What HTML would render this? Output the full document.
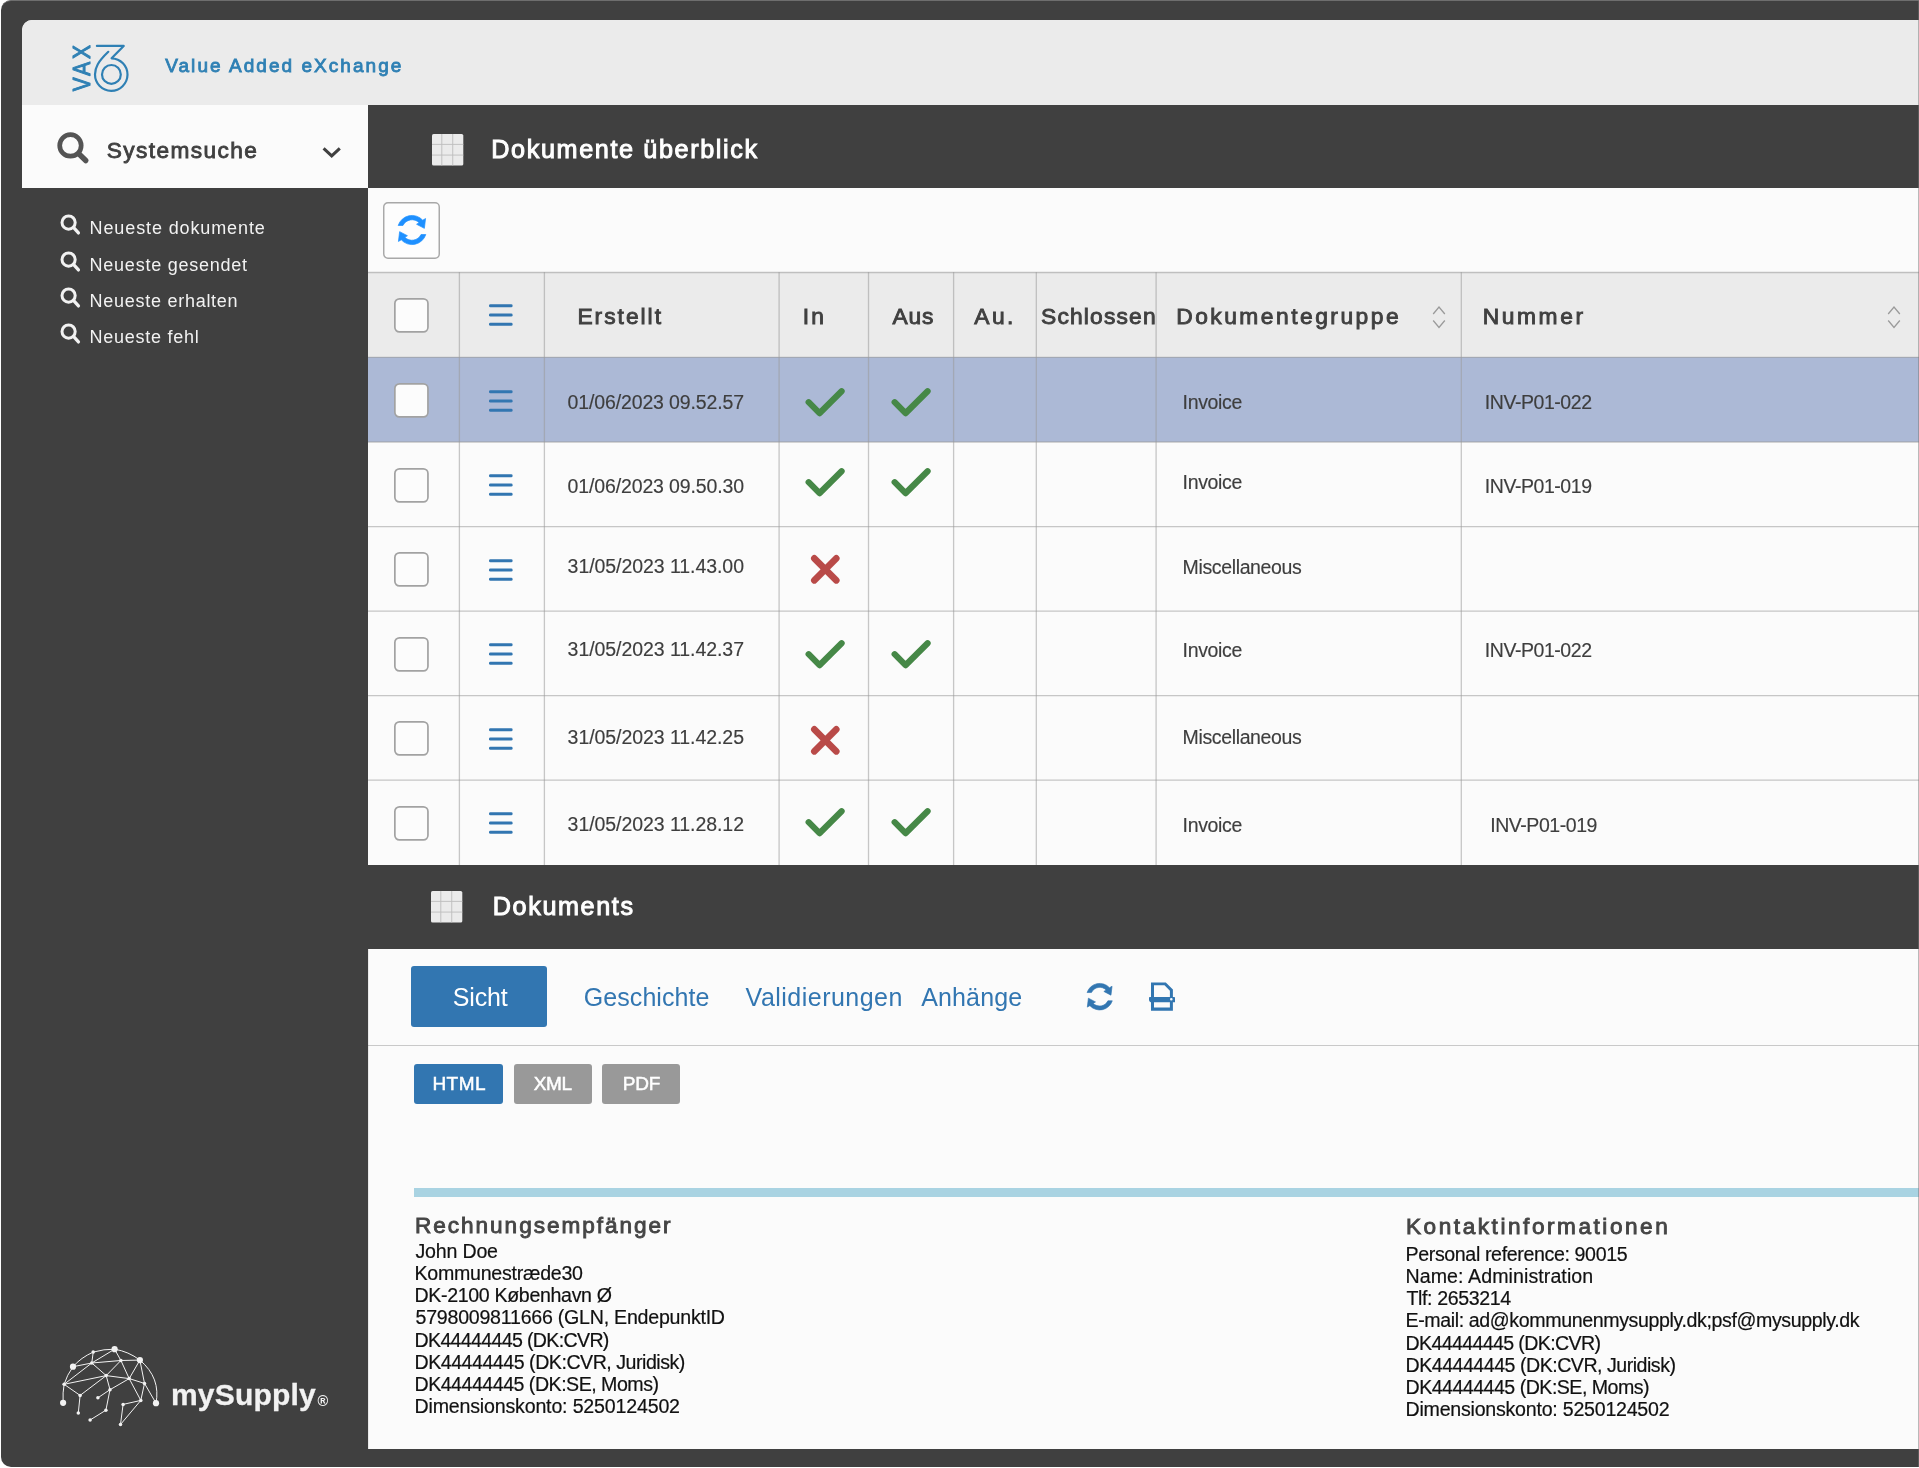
<!DOCTYPE html>
<html lang="de">
<head>
<meta charset="utf-8">
<title>VAX – Dokumente überblick</title>
<style>
html,body{margin:0;padding:0;background:#fff}
body{position:relative;width:1919px;height:1468px;overflow:hidden;font-family:"Liberation Sans",sans-serif;-webkit-font-smoothing:antialiased}
div,header,aside,main,section,nav,a,span,svg,ul,li,button{position:absolute;box-sizing:border-box;margin:0;padding:0}
.t{white-space:pre;display:block}
.ico{overflow:visible;display:block}
#frame{left:1px;top:0;width:1930px;height:1467px;background:#404040;border-radius:10px 0 0 10px;border-top:1px solid #6e6e6e}
#app{will-change:transform;left:22px;top:20px;width:1897px;height:1429px;background:#fbfbfb;border-top-left-radius:10px;overflow:hidden}
#top{left:0;top:0;width:1897px;height:85px;background:#ebebeb}
#side{left:0;top:85px;width:346px;height:1344px;background:#404040}
#side .head{left:0;top:0;width:346px;height:83px;background:#fbfbfb}
#main{left:346px;top:85px;width:1551px;height:1344px;background:#fbfbfb}
.bar{left:0;width:1551px;background:#404040}
.btn-ico{background:none;border:0}
.grid{left:0;width:1551px}
.row{left:0;width:1551px;background:#fbfbfb}
.row.hd{background:#ebebeb}
.row.sel{background:#acb9d6}
.hl{left:0;width:1551px;height:1px;background:rgba(140,140,140,.5)}
.vl{top:0;width:1px;background:rgba(140,140,140,.5)}
.cb{width:34px;height:34px}
.tab-on{background:#3276b1;border-radius:3px}
.pill{border-radius:3px}
.sep{left:0;width:1551px;height:1px;background:#c9c9c9}
.rule{background:#a9d3e2}
#edge{left:1918px;top:0;width:1px;height:1467px;background:rgba(119,119,119,.5)}
</style>
</head>
<body>
<div id="frame"></div>
<div id="app">

<header id="top"><svg class="ico" style="left:48px;top:20px" width="62" height="56" viewBox="70 40 62 56"><text transform="translate(90.3 91.2) rotate(-90) scale(.85 1)" x="0 18.3 38" font-family="Liberation Sans, sans-serif" font-weight="400" font-size="24.6" fill="#2f80b4" stroke="#2f80b4" stroke-width="1.15" stroke-linejoin="round">VAX</text><path d="M96.9 45.9H123.7L111.6 58.3A16.25 16.25 0 1 1 95 74.5C95 67.5 98 61.7 108.3 51.8" fill="none" stroke="#2f80b4" stroke-width="2.2" stroke-linecap="round" stroke-linejoin="round"/><circle cx="111.4" cy="74.4" r="9.4" fill="none" stroke="#2f80b4" stroke-width="2.2"/></svg><span class="t" style="left:143.20px;top:36.22px;font-size:19px;line-height:19px;color:#2f80b4;letter-spacing:2.052px;-webkit-text-stroke:0.85px #2f80b4;">Value Added eXchange</span></header>

<aside id="side">
<div class="head"><svg class="ico" style="left:32.75px;top:24.75px" width="36.15" height="35.95" viewBox="54.75 129.75 36.15 35.95"><circle cx="70.2" cy="145.2" r="10.75" fill="none" stroke="#545454" stroke-width="4.7"/><line x1="78.3" y1="153.3" x2="85.5" y2="160.3" stroke="#545454" stroke-width="5.4" stroke-linecap="round"/></svg><span class="t" style="left:84.80px;top:33.98px;font-size:22.7px;line-height:22.7px;color:#404040;letter-spacing:1.381px;-webkit-text-stroke:0.85px #404040;">Systemsuche</span><svg class="ico" style="left:298px;top:40px" width="24" height="14" viewBox="320 145 24 14"><polyline points="323.6,148.3 331.7,155.9 339.8,148.3" fill="none" stroke="#404040" stroke-width="3"/></svg></div>
<nav style="left:0;top:83px;width:346px;height:200px">
<a style="left:0;top:22.1px;width:346px;height:36px"><svg class="ico" style="left:36.85px;top:3.2px" width="22.75" height="23.2" viewBox="58.85 213.3 22.75 23.2"><circle cx="68.45" cy="222.9" r="6.6" fill="none" stroke="#f2f2f2" stroke-width="3"/><line x1="73.3" y1="227.8" x2="78.3" y2="233.2" stroke="#f2f2f2" stroke-width="3.3" stroke-linecap="round"/></svg><span class="t" style="left:67.60px;top:9.26px;font-size:18px;line-height:18px;color:#f2f2f2;letter-spacing:0.881px;">Neueste dokumente</span></a>
<a style="left:0;top:58.4px;width:346px;height:36px"><svg class="ico" style="left:36.85px;top:3.2px" width="22.75" height="23.2" viewBox="58.85 249.6 22.75 23.2"><circle cx="68.45" cy="259.2" r="6.6" fill="none" stroke="#f2f2f2" stroke-width="3"/><line x1="73.3" y1="264.1" x2="78.3" y2="269.5" stroke="#f2f2f2" stroke-width="3.3" stroke-linecap="round"/></svg><span class="t" style="left:67.60px;top:9.26px;font-size:18px;line-height:18px;color:#f2f2f2;letter-spacing:0.753px;">Neueste gesendet</span></a>
<a style="left:0;top:94.8px;width:346px;height:36px"><svg class="ico" style="left:36.85px;top:3.2px" width="22.75" height="23.2" viewBox="58.85 286 22.75 23.2"><circle cx="68.45" cy="295.6" r="6.6" fill="none" stroke="#f2f2f2" stroke-width="3"/><line x1="73.3" y1="300.5" x2="78.3" y2="305.9" stroke="#f2f2f2" stroke-width="3.3" stroke-linecap="round"/></svg><span class="t" style="left:67.60px;top:9.26px;font-size:18px;line-height:18px;color:#f2f2f2;letter-spacing:0.727px;">Neueste erhalten</span></a>
<a style="left:0;top:131.2px;width:346px;height:36px"><svg class="ico" style="left:36.85px;top:3.2px" width="22.75" height="23.2" viewBox="58.85 322.4 22.75 23.2"><circle cx="68.45" cy="332" r="6.6" fill="none" stroke="#f2f2f2" stroke-width="3"/><line x1="73.3" y1="336.9" x2="78.3" y2="342.3" stroke="#f2f2f2" stroke-width="3.3" stroke-linecap="round"/></svg><span class="t" style="left:67.60px;top:9.26px;font-size:18px;line-height:18px;color:#f2f2f2;letter-spacing:0.738px;">Neueste fehl</span></a></nav>
<div style="left:36px;top:1235px;width:290px;height:95px;"><svg class="ico" style="left:0px;top:4px" width="104" height="86" viewBox="58 1344 104 86"><g stroke="#f2f2f2" stroke-width="1" stroke-linecap="round"><line x1="93.2" y1="1352.1" x2="91.8" y2="1363"/><line x1="91.8" y1="1363" x2="114.6" y2="1349.2"/><line x1="91.8" y1="1363" x2="120.9" y2="1360.5"/><line x1="120.9" y1="1360.5" x2="139.9" y2="1360.1"/><line x1="114.6" y1="1349.2" x2="120.9" y2="1360.5"/><line x1="73" y1="1366.7" x2="91.8" y2="1363"/><line x1="91.8" y1="1363" x2="64.1" y2="1384.3"/><line x1="91.8" y1="1363" x2="106.2" y2="1375.6"/><line x1="120.9" y1="1360.5" x2="106.2" y2="1375.6"/><line x1="120.9" y1="1360.5" x2="129.2" y2="1378.6"/><line x1="139.9" y1="1360.1" x2="129.2" y2="1378.6"/><line x1="139.9" y1="1360.1" x2="144.5" y2="1383.4"/><line x1="106.2" y1="1375.6" x2="64.1" y2="1384.3"/><line x1="106.2" y1="1375.6" x2="129.2" y2="1378.6"/><line x1="106.2" y1="1375.6" x2="80.1" y2="1395.4"/><line x1="106.2" y1="1375.6" x2="110" y2="1389.7"/><line x1="129.2" y1="1378.6" x2="110" y2="1389.7"/><line x1="129.2" y1="1378.6" x2="144.5" y2="1383.4"/><line x1="129.2" y1="1378.6" x2="140.8" y2="1400.4"/><line x1="64.1" y1="1384.3" x2="80.1" y2="1395.4"/><line x1="80.1" y1="1395.4" x2="78.3" y2="1413"/><line x1="110" y1="1389.7" x2="97.9" y2="1397.8"/><line x1="110" y1="1389.7" x2="105.9" y2="1410.2"/><line x1="105.9" y1="1410.2" x2="90.1" y2="1420"/><line x1="140.8" y1="1400.4" x2="123.1" y2="1404.4"/><line x1="123.1" y1="1404.4" x2="120.5" y2="1424.5"/><line x1="140.8" y1="1400.4" x2="120.5" y2="1424.5"/><line x1="144.5" y1="1383.4" x2="140.8" y2="1400.4"/><line x1="144.5" y1="1383.4" x2="156" y2="1403.2"/><path d="M63.1 1402.8Q62.6 1392 64.1 1384.3Q67 1375 73 1366.7Q81 1357.5 93.2 1352.1Q104 1349 114.6 1349.2Q128.5 1351.5 139.9 1360.1Q161 1378 156 1403.2" fill="none"/></g><g fill="#f2f2f2"><circle cx="114.6" cy="1349.2" r="3.1"/><circle cx="93.2" cy="1352.1" r="1.75"/><circle cx="139.9" cy="1360.1" r="3.1"/><circle cx="120.9" cy="1360.5" r="1.75"/><circle cx="91.8" cy="1363" r="1.75"/><circle cx="73" cy="1366.7" r="3.1"/><circle cx="106.2" cy="1375.6" r="1.75"/><circle cx="129.2" cy="1378.6" r="1.75"/><circle cx="144.5" cy="1383.4" r="1.75"/><circle cx="64.1" cy="1384.3" r="1.75"/><circle cx="110" cy="1389.7" r="1.75"/><circle cx="80.1" cy="1395.4" r="1.75"/><circle cx="97.9" cy="1397.8" r="1.75"/><circle cx="140.8" cy="1400.4" r="1.75"/><circle cx="63.1" cy="1402.8" r="3.1"/><circle cx="156" cy="1403.2" r="3.1"/><circle cx="123.1" cy="1404.4" r="1.75"/><circle cx="105.9" cy="1410.2" r="1.75"/><circle cx="78.3" cy="1413" r="1.75"/><circle cx="90.1" cy="1420" r="1.75"/><circle cx="120.5" cy="1424.5" r="1.75"/></g></svg><span class="t" style="left:113.00px;top:40.40px;font-size:30px;line-height:30px;color:#f2f2f2;letter-spacing:0.175px;font-weight:700;-webkit-text-stroke:0.3px #f2f2f2;">mySupply</span><span class="t" style="left:259.60px;top:54.03px;font-size:14.5px;line-height:14.5px;color:#f2f2f2;letter-spacing:0.000px;font-weight:700;">®</span></div></aside>

<main id="main">
<div class="bar" style="top:0;height:83px"><svg class="ico" style="left:63.6px;top:29px" width="31.3" height="31.5" viewBox="431.6 134 31.3 31.5"><rect x="431.6" y="134" width="31.3" height="31.5" rx="1.6" fill="#ebebeb"/><line x1="441.4" y1="134" x2="441.4" y2="165.5" stroke="#bcbcbc" stroke-width=".9"/><line x1="452.35" y1="134" x2="452.35" y2="165.5" stroke="#bcbcbc" stroke-width=".9"/><line x1="431.6" y1="144.4" x2="462.90000000000003" y2="144.4" stroke="#bcbcbc" stroke-width=".9"/><line x1="431.6" y1="155.1" x2="462.90000000000003" y2="155.1" stroke="#bcbcbc" stroke-width=".9"/></svg><span class="t" style="left:123.30px;top:32.07px;font-size:25.2px;line-height:25.2px;color:#fff;letter-spacing:1.622px;-webkit-text-stroke:1.0px #fff;">Dokumente überblick</span></div>
<div style="left:0px;top:83px;width:1551px;height:84px;"><button class="btn-ico" style="left:15px;top:14px;width:57px;height:57px;"><svg class="ico" style="left:0;top:0" width="57" height="57" viewBox="0 0 57 57"><rect x="0.75" y="0.75" width="55.5" height="55.5" rx="4.2" fill="#fdfdfd" stroke="#a8a8a8" stroke-width="1.45"/></svg><svg class="ico" style="left:13.53px;top:13.34px" width="30" height="30" viewBox="396.53 215.34 30 30"><g transform="translate(411.53 230.34) scale(1)" fill="#1e90ff" stroke="#1e90ff" stroke-width="0.7" stroke-linejoin="round"><path d="M-13.82 -4.54A14.55 14.55 0 0 1 10.73 -9.83L13.57 -11.44L12.37 -1.64L4.57 -5.74L7.12 -7.37A10.1 10.1 0 0 0 -9.02 -4.54Z"/><path transform="rotate(180)" d="M-13.82 -4.54A14.55 14.55 0 0 1 10.73 -9.83L13.57 -11.44L12.37 -1.64L4.57 -5.74L7.12 -7.37A10.1 10.1 0 0 0 -9.02 -4.54Z"/></g></svg></button></div>
<div class="grid" style="top:167px;height:593px">
<div class="row hd" style="top:0;height:85px"><span class="cb" style="left:26.1px;top:25.9px"><svg class="ico" style="left:0;top:0" width="35" height="35" viewBox="0 0 35 35"><rect x="0.85" y="0.85" width="33.1" height="33.1" rx="4.6" fill="#fcfcfc" stroke="#a2a2a2" stroke-width="1.7"/></svg></span><svg class="ico" style="left:120.7px;top:31.3px" width="23.6" height="24" viewBox="488.7 303.3 23.6 24"><rect x="488.7" y="304.45" width="23.6" height="3.2" rx="1.4" fill="#3276b1"/><rect x="488.7" y="313.7" width="23.6" height="3.2" rx="1.4" fill="#3276b1"/><rect x="488.7" y="322.95" width="23.6" height="3.2" rx="1.4" fill="#3276b1"/></svg><span class="t" style="left:209.40px;top:32.70px;font-size:22.8px;line-height:22.8px;color:#404040;letter-spacing:1.990px;-webkit-text-stroke:0.9px #404040;">Erstellt</span><span class="t" style="left:434.80px;top:32.70px;font-size:22.8px;line-height:22.8px;color:#404040;letter-spacing:2.184px;-webkit-text-stroke:0.9px #404040;">In</span><span class="t" style="left:524.40px;top:32.70px;font-size:22.8px;line-height:22.8px;color:#404040;letter-spacing:0.852px;-webkit-text-stroke:0.9px #404040;">Aus</span><span class="t" style="left:606.20px;top:32.70px;font-size:22.8px;line-height:22.8px;color:#404040;letter-spacing:2.491px;-webkit-text-stroke:0.9px #404040;">Au.</span><span class="t" style="left:673.00px;top:32.70px;font-size:22.8px;line-height:22.8px;color:#404040;letter-spacing:1.177px;-webkit-text-stroke:0.9px #404040;">Schlossen</span><span class="t" style="left:808.20px;top:32.70px;font-size:22.8px;line-height:22.8px;color:#404040;letter-spacing:2.488px;-webkit-text-stroke:0.9px #404040;">Dokumentegruppe</span><span class="t" style="left:1114.80px;top:32.70px;font-size:22.8px;line-height:22.8px;color:#404040;letter-spacing:2.559px;-webkit-text-stroke:0.9px #404040;">Nummer</span><svg class="ico" style="left:1063.8px;top:34.3px" width="14" height="22.4" viewBox="1431.8 306.3 14 22.4"><polyline points="1433.0,314.3 1438.8,307.3 1444.6,314.3" fill="none" stroke="#9a9a9a" stroke-width="1.3"/><polyline points="1433.0,320.8 1438.8,327.7 1444.6,320.8" fill="none" stroke="#9a9a9a" stroke-width="1.3"/></svg><svg class="ico" style="left:1519.3px;top:34.3px" width="14" height="22.4" viewBox="1887.3 306.3 14 22.4"><polyline points="1888.5,314.3 1894.3,307.3 1900.1,314.3" fill="none" stroke="#9a9a9a" stroke-width="1.3"/><polyline points="1888.5,320.8 1894.3,327.7 1900.1,320.8" fill="none" stroke="#9a9a9a" stroke-width="1.3"/></svg></div>
<div class="row sel" style="top:85px;height:85px"><span class="cb" style="left:26.1px;top:25.9px"><svg class="ico" style="left:0;top:0" width="35" height="35" viewBox="0 0 35 35"><rect x="0.85" y="0.85" width="33.1" height="33.1" rx="4.6" fill="#fcfcfc" stroke="#a2a2a2" stroke-width="1.7"/></svg></span><svg class="ico" style="left:120.7px;top:31.5px" width="23.6" height="24" viewBox="488.7 388.5 23.6 24"><rect x="488.7" y="389.65" width="23.6" height="3.2" rx="1.4" fill="#3276b1"/><rect x="488.7" y="398.9" width="23.6" height="3.2" rx="1.4" fill="#3276b1"/><rect x="488.7" y="408.15" width="23.6" height="3.2" rx="1.4" fill="#3276b1"/></svg><span class="t" style="left:199.60px;top:36.19px;font-size:19.5px;line-height:19.5px;color:#3e3e3e;letter-spacing:-0.140px;-webkit-text-stroke:0.15px #3e3e3e;">01/06/2023 09.52.57</span><svg class="ico" style="left:437.1px;top:30.5px" width="40" height="28.6" viewBox="805.1 387.5 40 28.6"><polyline points="808.75,401.7 819.6,412.7 841.7,390.7" fill="none" stroke="#468847" stroke-width="6.2" stroke-linecap="round" stroke-linejoin="round"/></svg><svg class="ico" style="left:523.4px;top:30.5px" width="40" height="28.6" viewBox="891.4 387.5 40 28.6"><polyline points="895.05,401.7 905.9,412.7 928,390.7" fill="none" stroke="#468847" stroke-width="6.2" stroke-linecap="round" stroke-linejoin="round"/></svg><span class="t" style="left:814.60px;top:36.09px;font-size:19.5px;line-height:19.5px;color:#3e3e3e;letter-spacing:-0.333px;-webkit-text-stroke:0.15px #3e3e3e;">Invoice</span><span class="t" style="left:1116.80px;top:36.29px;font-size:19.5px;line-height:19.5px;color:#3e3e3e;letter-spacing:-0.446px;-webkit-text-stroke:0.15px #3e3e3e;">INV-P01-022</span></div>
<div class="row" style="top:170px;height:84px"><span class="cb" style="left:26.1px;top:25.5px"><svg class="ico" style="left:0;top:0" width="35" height="35" viewBox="0 0 35 35"><rect x="0.85" y="0.85" width="33.1" height="33.1" rx="4.6" fill="#fcfcfc" stroke="#a2a2a2" stroke-width="1.7"/></svg></span><svg class="ico" style="left:120.7px;top:31.1px" width="23.6" height="24" viewBox="488.7 473.1 23.6 24"><rect x="488.7" y="474.25" width="23.6" height="3.2" rx="1.4" fill="#3276b1"/><rect x="488.7" y="483.5" width="23.6" height="3.2" rx="1.4" fill="#3276b1"/><rect x="488.7" y="492.75" width="23.6" height="3.2" rx="1.4" fill="#3276b1"/></svg><span class="t" style="left:199.60px;top:35.09px;font-size:19.5px;line-height:19.5px;color:#3e3e3e;letter-spacing:-0.140px;-webkit-text-stroke:0.15px #3e3e3e;">01/06/2023 09.50.30</span><svg class="ico" style="left:437.1px;top:26.3px" width="40" height="28.6" viewBox="805.1 468.3 40 28.6"><polyline points="808.75,482.5 819.6,493.5 841.7,471.5" fill="none" stroke="#468847" stroke-width="6.2" stroke-linecap="round" stroke-linejoin="round"/></svg><svg class="ico" style="left:523.4px;top:26.3px" width="40" height="28.6" viewBox="891.4 468.3 40 28.6"><polyline points="895.05,482.5 905.9,493.5 928,471.5" fill="none" stroke="#468847" stroke-width="6.2" stroke-linecap="round" stroke-linejoin="round"/></svg><span class="t" style="left:814.60px;top:30.79px;font-size:19.5px;line-height:19.5px;color:#3e3e3e;letter-spacing:-0.333px;-webkit-text-stroke:0.15px #3e3e3e;">Invoice</span><span class="t" style="left:1116.80px;top:35.09px;font-size:19.5px;line-height:19.5px;color:#3e3e3e;letter-spacing:-0.446px;-webkit-text-stroke:0.15px #3e3e3e;">INV-P01-019</span></div>
<div class="row" style="top:254px;height:85px"><span class="cb" style="left:26.1px;top:25.9px"><svg class="ico" style="left:0;top:0" width="35" height="35" viewBox="0 0 35 35"><rect x="0.85" y="0.85" width="33.1" height="33.1" rx="4.6" fill="#fcfcfc" stroke="#a2a2a2" stroke-width="1.7"/></svg></span><svg class="ico" style="left:120.7px;top:31.5px" width="23.6" height="24" viewBox="488.7 557.5 23.6 24"><rect x="488.7" y="558.65" width="23.6" height="3.2" rx="1.4" fill="#3276b1"/><rect x="488.7" y="567.9" width="23.6" height="3.2" rx="1.4" fill="#3276b1"/><rect x="488.7" y="577.15" width="23.6" height="3.2" rx="1.4" fill="#3276b1"/></svg><span class="t" style="left:199.60px;top:31.09px;font-size:19.5px;line-height:19.5px;color:#3e3e3e;letter-spacing:-0.060px;-webkit-text-stroke:0.15px #3e3e3e;">31/05/2023 11.43.00</span><svg class="ico" style="left:442.7px;top:29px" width="28.6" height="28.6" viewBox="810.7 555 28.6 28.6"><line x1="814" y1="558.3" x2="836" y2="580.3" stroke="#b94a48" stroke-width="6.6" stroke-linecap="round"/><line x1="836" y1="558.3" x2="814" y2="580.3" stroke="#b94a48" stroke-width="6.6" stroke-linecap="round"/></svg><span class="t" style="left:814.60px;top:31.79px;font-size:19.5px;line-height:19.5px;color:#3e3e3e;letter-spacing:-0.364px;-webkit-text-stroke:0.15px #3e3e3e;">Miscellaneous</span></div>
<div class="row" style="top:339px;height:84px"><span class="cb" style="left:26.1px;top:25.6px"><svg class="ico" style="left:0;top:0" width="35" height="35" viewBox="0 0 35 35"><rect x="0.85" y="0.85" width="33.1" height="33.1" rx="4.6" fill="#fcfcfc" stroke="#a2a2a2" stroke-width="1.7"/></svg></span><svg class="ico" style="left:120.7px;top:31.2px" width="23.6" height="24" viewBox="488.7 642.2 23.6 24"><rect x="488.7" y="643.35" width="23.6" height="3.2" rx="1.4" fill="#3276b1"/><rect x="488.7" y="652.6" width="23.6" height="3.2" rx="1.4" fill="#3276b1"/><rect x="488.7" y="661.85" width="23.6" height="3.2" rx="1.4" fill="#3276b1"/></svg><span class="t" style="left:199.60px;top:29.49px;font-size:19.5px;line-height:19.5px;color:#3e3e3e;letter-spacing:-0.060px;-webkit-text-stroke:0.15px #3e3e3e;">31/05/2023 11.42.37</span><svg class="ico" style="left:437.1px;top:28.5px" width="40" height="28.6" viewBox="805.1 639.5 40 28.6"><polyline points="808.75,653.7 819.6,664.7 841.7,642.7" fill="none" stroke="#468847" stroke-width="6.2" stroke-linecap="round" stroke-linejoin="round"/></svg><svg class="ico" style="left:523.4px;top:28.5px" width="40" height="28.6" viewBox="891.4 639.5 40 28.6"><polyline points="895.05,653.7 905.9,664.7 928,642.7" fill="none" stroke="#468847" stroke-width="6.2" stroke-linecap="round" stroke-linejoin="round"/></svg><span class="t" style="left:814.60px;top:30.09px;font-size:19.5px;line-height:19.5px;color:#3e3e3e;letter-spacing:-0.333px;-webkit-text-stroke:0.15px #3e3e3e;">Invoice</span><span class="t" style="left:1116.80px;top:30.09px;font-size:19.5px;line-height:19.5px;color:#3e3e3e;letter-spacing:-0.446px;-webkit-text-stroke:0.15px #3e3e3e;">INV-P01-022</span></div>
<div class="row" style="top:423px;height:85px"><span class="cb" style="left:26.1px;top:26.2px"><svg class="ico" style="left:0;top:0" width="35" height="35" viewBox="0 0 35 35"><rect x="0.85" y="0.85" width="33.1" height="33.1" rx="4.6" fill="#fcfcfc" stroke="#a2a2a2" stroke-width="1.7"/></svg></span><svg class="ico" style="left:120.7px;top:31.8px" width="23.6" height="24" viewBox="488.7 726.8 23.6 24"><rect x="488.7" y="727.95" width="23.6" height="3.2" rx="1.4" fill="#3276b1"/><rect x="488.7" y="737.2" width="23.6" height="3.2" rx="1.4" fill="#3276b1"/><rect x="488.7" y="746.45" width="23.6" height="3.2" rx="1.4" fill="#3276b1"/></svg><span class="t" style="left:199.60px;top:32.79px;font-size:19.5px;line-height:19.5px;color:#3e3e3e;letter-spacing:-0.060px;-webkit-text-stroke:0.15px #3e3e3e;">31/05/2023 11.42.25</span><svg class="ico" style="left:442.7px;top:31px" width="28.6" height="28.6" viewBox="810.7 726 28.6 28.6"><line x1="814" y1="729.3" x2="836" y2="751.3" stroke="#b94a48" stroke-width="6.6" stroke-linecap="round"/><line x1="836" y1="729.3" x2="814" y2="751.3" stroke="#b94a48" stroke-width="6.6" stroke-linecap="round"/></svg><span class="t" style="left:814.60px;top:33.09px;font-size:19.5px;line-height:19.5px;color:#3e3e3e;letter-spacing:-0.364px;-webkit-text-stroke:0.15px #3e3e3e;">Miscellaneous</span></div>
<div class="row" style="top:508px;height:85px"><span class="cb" style="left:26.1px;top:25.6px"><svg class="ico" style="left:0;top:0" width="35" height="35" viewBox="0 0 35 35"><rect x="0.85" y="0.85" width="33.1" height="33.1" rx="4.6" fill="#fcfcfc" stroke="#a2a2a2" stroke-width="1.7"/></svg></span><svg class="ico" style="left:120.7px;top:31.2px" width="23.6" height="24" viewBox="488.7 811.2 23.6 24"><rect x="488.7" y="812.35" width="23.6" height="3.2" rx="1.4" fill="#3276b1"/><rect x="488.7" y="821.6" width="23.6" height="3.2" rx="1.4" fill="#3276b1"/><rect x="488.7" y="830.85" width="23.6" height="3.2" rx="1.4" fill="#3276b1"/></svg><span class="t" style="left:199.60px;top:35.49px;font-size:19.5px;line-height:19.5px;color:#3e3e3e;letter-spacing:-0.060px;-webkit-text-stroke:0.15px #3e3e3e;">31/05/2023 11.28.12</span><svg class="ico" style="left:437.1px;top:28.3px" width="40" height="28.6" viewBox="805.1 808.3 40 28.6"><polyline points="808.75,822.5 819.6,833.5 841.7,811.5" fill="none" stroke="#468847" stroke-width="6.2" stroke-linecap="round" stroke-linejoin="round"/></svg><svg class="ico" style="left:523.4px;top:28.3px" width="40" height="28.6" viewBox="891.4 808.3 40 28.6"><polyline points="895.05,822.5 905.9,833.5 928,811.5" fill="none" stroke="#468847" stroke-width="6.2" stroke-linecap="round" stroke-linejoin="round"/></svg><span class="t" style="left:814.60px;top:36.09px;font-size:19.5px;line-height:19.5px;color:#3e3e3e;letter-spacing:-0.333px;-webkit-text-stroke:0.15px #3e3e3e;">Invoice</span><span class="t" style="left:1122.20px;top:36.09px;font-size:19.5px;line-height:19.5px;color:#3e3e3e;letter-spacing:-0.446px;-webkit-text-stroke:0.15px #3e3e3e;">INV-P01-019</span></div><svg class="ico" style="left:0;top:0" width="1551" height="593" viewBox="0 0 1551 593"><g stroke="#9a9a9a" stroke-opacity=".55" stroke-width="1.3"><line x1="91.4" y1="0" x2="91.4" y2="593"/><line x1="176.4" y1="0" x2="176.4" y2="593"/><line x1="411.1" y1="0" x2="411.1" y2="593"/><line x1="500.5" y1="0" x2="500.5" y2="593"/><line x1="585.6" y1="0" x2="585.6" y2="593"/><line x1="668.3" y1="0" x2="668.3" y2="593"/><line x1="788.1" y1="0" x2="788.1" y2="593"/><line x1="1093.3" y1="0" x2="1093.3" y2="593"/><line x1="0" y1="0.5" x2="1551" y2="0.5"/><line x1="0" y1="85.4" x2="1551" y2="85.4"/><line x1="0" y1="170" x2="1551" y2="170"/><line x1="0" y1="254.7" x2="1551" y2="254.7"/><line x1="0" y1="339.1" x2="1551" y2="339.1"/><line x1="0" y1="423.7" x2="1551" y2="423.7"/><line x1="0" y1="508.1" x2="1551" y2="508.1"/></g></svg></div>
<div class="bar" style="top:760px;height:84px"><svg class="ico" style="left:63.4px;top:26.4px" width="31.3" height="31.5" viewBox="431.4 891.4 31.3 31.5"><rect x="431.4" y="891.4" width="31.3" height="31.5" rx="1.6" fill="#ebebeb"/><line x1="441.2" y1="891.4" x2="441.2" y2="922.9" stroke="#bcbcbc" stroke-width=".9"/><line x1="452.15" y1="891.4" x2="452.15" y2="922.9" stroke="#bcbcbc" stroke-width=".9"/><line x1="431.4" y1="901.8" x2="462.7" y2="901.8" stroke="#bcbcbc" stroke-width=".9"/><line x1="431.4" y1="912.5" x2="462.7" y2="912.5" stroke="#bcbcbc" stroke-width=".9"/></svg><span class="t" style="left:124.80px;top:28.67px;font-size:25.2px;line-height:25.2px;color:#fff;letter-spacing:1.601px;-webkit-text-stroke:1.0px #fff;">Dokuments</span></div>
<div style="left:0px;top:844px;width:1551px;height:96px;">
<a class="tab-on" style="left:43.3px;top:17px;width:135.7px;height:60.7px;"><span class="t" style="left:41.50px;top:18.54px;font-size:25px;line-height:25px;color:#fff;letter-spacing:-0.198px;">Sicht</span></a><span class="t" style="left:215.80px;top:35.54px;font-size:25px;line-height:25px;color:#3276b1;letter-spacing:0.060px;">Geschichte</span><span class="t" style="left:377.60px;top:35.54px;font-size:25px;line-height:25px;color:#3276b1;letter-spacing:0.479px;">Validierungen</span><span class="t" style="left:553.20px;top:35.54px;font-size:25px;line-height:25px;color:#3276b1;letter-spacing:0.148px;">Anhänge</span><svg class="ico" style="left:718.12px;top:33.72px" width="27.36" height="27.36" viewBox="1086.12 982.72 27.36 27.36"><g transform="translate(1099.8 996.4) scale(0.912)" fill="#3276b1" stroke="#3276b1" stroke-width="0.7" stroke-linejoin="round"><path d="M-13.82 -4.54A14.55 14.55 0 0 1 10.73 -9.83L13.57 -11.44L12.37 -1.64L4.57 -5.74L7.12 -7.37A10.1 10.1 0 0 0 -9.02 -4.54Z"/><path transform="rotate(180)" d="M-13.82 -4.54A14.55 14.55 0 0 1 10.73 -9.83L13.57 -11.44L12.37 -1.64L4.57 -5.74L7.12 -7.37A10.1 10.1 0 0 0 -9.02 -4.54Z"/></g></svg><svg class="ico" style="left:780px;top:32px" width="28" height="31" viewBox="1148 981 28 31"><path fill="#3276b1" fill-rule="evenodd" d="M1151 982.4H1165.8L1172.9 989.6V996.9H1174.2Q1175 996.9 1175 997.7V1002.2H1172.9V1010.7H1151V1002.2H1150.6Q1149 1001.6 1149 1000V997.7Q1149 996.9 1149.8 996.9H1151ZM1154 985.3V996.9H1169.9V990.7L1164.5 985.3ZM1154 1002.2V1007.6H1169.9V1002.2ZM1171.3 997.9A1.3 1.3 0 1 0 1171.3 1000.5A1.3 1.3 0 1 0 1171.3 997.9Z"/></svg></div>
<div class="sep" style="top:940px"></div>
<section style="left:0px;top:941px;width:1551px;height:403px;"><span class="pill" style="left:46px;top:18.3px;width:89px;height:39.7px;background:#3276b1"><span class="t" style="left:18.40px;top:9.62px;font-size:19px;line-height:19px;color:#fff;letter-spacing:0.489px;-webkit-text-stroke:0.5px #fff;">HTML</span></span><span class="pill" style="left:145.7px;top:18.3px;width:78.2px;height:39.7px;background:#999"><span class="t" style="left:20.10px;top:9.62px;font-size:19px;line-height:19px;color:#fff;letter-spacing:-0.439px;-webkit-text-stroke:0.5px #fff;">XML</span></span><span class="pill" style="left:234px;top:18.3px;width:77.9px;height:39.7px;background:#999"><span class="t" style="left:20.80px;top:9.62px;font-size:19px;line-height:19px;color:#fff;letter-spacing:-0.200px;-webkit-text-stroke:0.5px #fff;">PDF</span></span><div class="rule" style="left:46px;top:142.3px;width:1505px;height:9px;"></div>
<div style="left:46px;top:159px;width:700px;height:230px;"><span class="t" style="left:1.00px;top:10.37px;font-size:22.6px;line-height:22.6px;color:#454545;letter-spacing:1.957px;-webkit-text-stroke:0.9px #454545;">Rechnungsempfänger</span><span class="t" style="left:1.50px;top:36.61px;font-size:19.6px;line-height:19.6px;color:#111;letter-spacing:-0.199px;-webkit-text-stroke:0.2px #111;">John Doe</span><span class="t" style="left:0.50px;top:58.91px;font-size:19.6px;line-height:19.6px;color:#111;letter-spacing:-0.256px;-webkit-text-stroke:0.2px #111;">Kommunestræde30</span><span class="t" style="left:0.50px;top:81.21px;font-size:19.6px;line-height:19.6px;color:#111;letter-spacing:-0.344px;-webkit-text-stroke:0.2px #111;">DK-2100 København Ø</span><span class="t" style="left:1.50px;top:103.21px;font-size:19.6px;line-height:19.6px;color:#111;letter-spacing:-0.238px;-webkit-text-stroke:0.2px #111;">5798009811666 (GLN, EndepunktID</span><span class="t" style="left:0.50px;top:125.61px;font-size:19.6px;line-height:19.6px;color:#111;letter-spacing:-0.668px;-webkit-text-stroke:0.2px #111;">DK44444445 (DK:CVR)</span><span class="t" style="left:0.50px;top:147.91px;font-size:19.6px;line-height:19.6px;color:#111;letter-spacing:-0.476px;-webkit-text-stroke:0.2px #111;">DK44444445 (DK:CVR, Juridisk)</span><span class="t" style="left:0.50px;top:169.91px;font-size:19.6px;line-height:19.6px;color:#111;letter-spacing:-0.497px;-webkit-text-stroke:0.2px #111;">DK44444445 (DK:SE, Moms)</span><span class="t" style="left:0.50px;top:192.21px;font-size:19.6px;line-height:19.6px;color:#111;letter-spacing:-0.179px;-webkit-text-stroke:0.2px #111;">Dimensionskonto: 5250124502</span></div>
<div style="left:1038px;top:159px;width:513px;height:230px;"><span class="t" style="left:-0.00px;top:10.67px;font-size:22.6px;line-height:22.6px;color:#454545;letter-spacing:2.541px;-webkit-text-stroke:0.9px #454545;">Kontaktinformationen</span><span class="t" style="left:-0.50px;top:39.81px;font-size:19.6px;line-height:19.6px;color:#111;letter-spacing:-0.368px;-webkit-text-stroke:0.2px #111;">Personal reference: 90015</span><span class="t" style="left:-0.50px;top:62.01px;font-size:19.6px;line-height:19.6px;color:#111;letter-spacing:0.078px;-webkit-text-stroke:0.2px #111;">Name: Administration</span><span class="t" style="left:0.50px;top:84.21px;font-size:19.6px;line-height:19.6px;color:#111;letter-spacing:-0.385px;-webkit-text-stroke:0.2px #111;">Tlf: 2653214</span><span class="t" style="left:-0.50px;top:106.31px;font-size:19.6px;line-height:19.6px;color:#111;letter-spacing:-0.384px;-webkit-text-stroke:0.2px #111;">E-mail: ad@kommunenmysupply.dk;psf@mysupply.dk</span><span class="t" style="left:-0.50px;top:128.81px;font-size:19.6px;line-height:19.6px;color:#111;letter-spacing:-0.635px;-webkit-text-stroke:0.2px #111;">DK44444445 (DK:CVR)</span><span class="t" style="left:-0.50px;top:150.71px;font-size:19.6px;line-height:19.6px;color:#111;letter-spacing:-0.491px;-webkit-text-stroke:0.2px #111;">DK44444445 (DK:CVR, Juridisk)</span><span class="t" style="left:-0.50px;top:172.91px;font-size:19.6px;line-height:19.6px;color:#111;letter-spacing:-0.514px;-webkit-text-stroke:0.2px #111;">DK44444445 (DK:SE, Moms)</span><span class="t" style="left:-0.50px;top:195.41px;font-size:19.6px;line-height:19.6px;color:#111;letter-spacing:-0.233px;-webkit-text-stroke:0.2px #111;">Dimensionskonto: 5250124502</span></div></section>
<div style="left:0px;top:844px;width:1px;height:500px;background:rgba(0,0,0,.07)"></div></main>
</div>
<div id="edge"></div>
</body>
</html>
